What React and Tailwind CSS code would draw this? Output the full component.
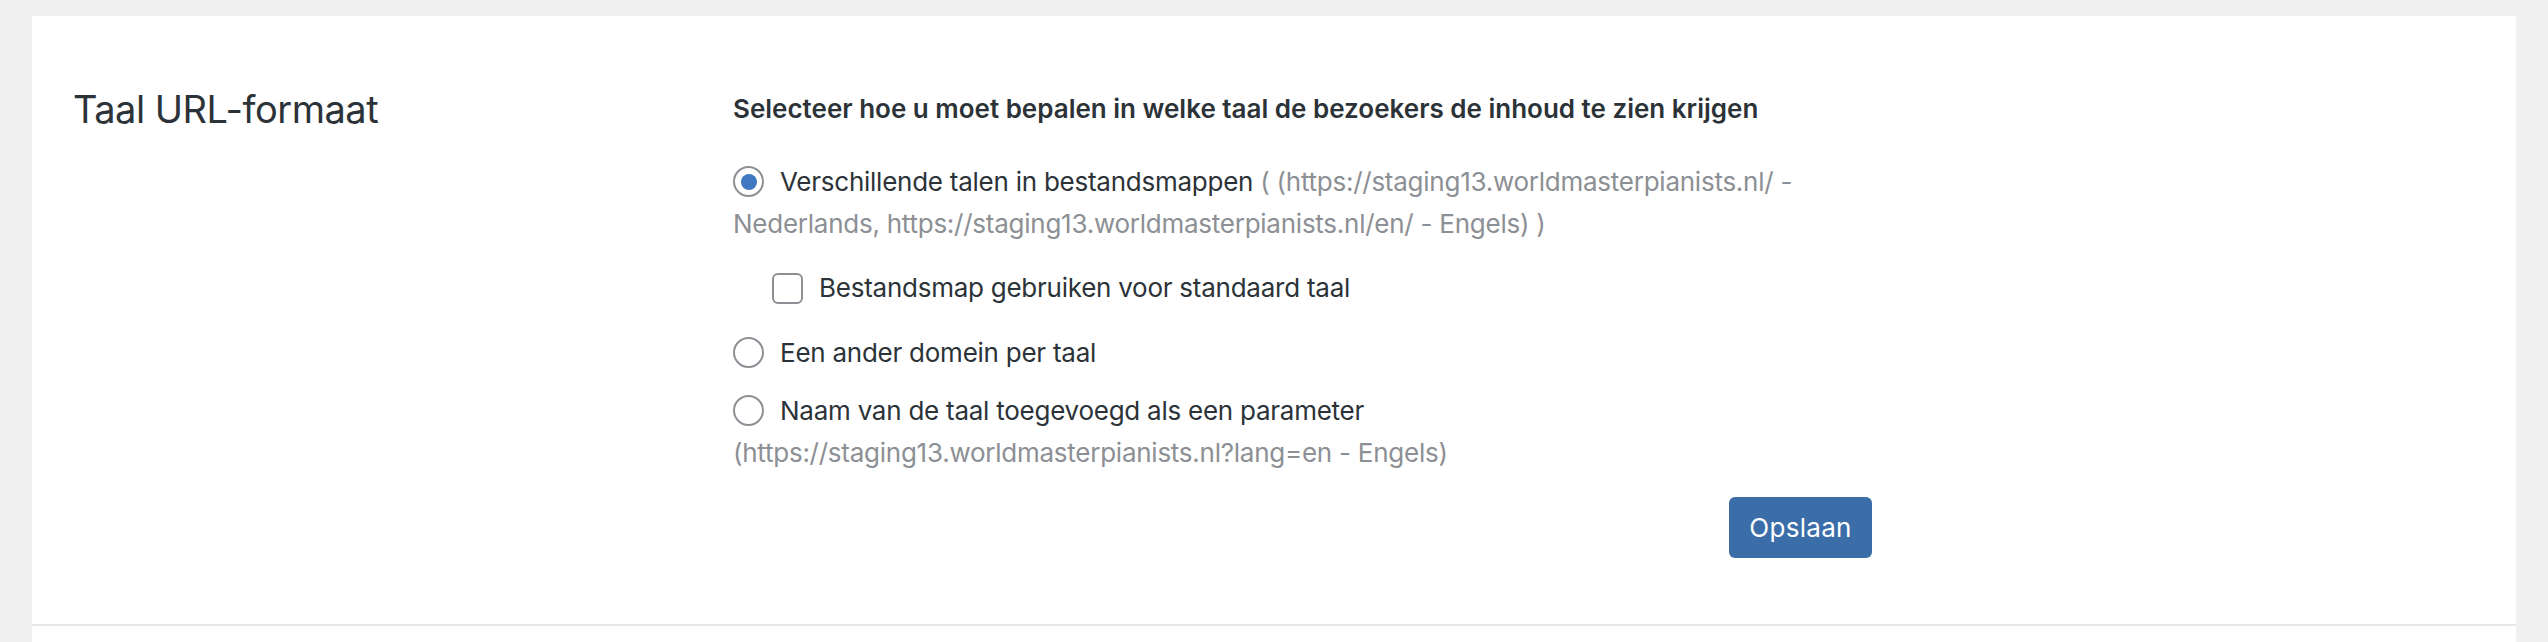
export default function App() {
  const font = { fontFamily: 'Inter, "Noto Sans", sans-serif' };
  const Radio = ({ checked }) => (
    <span className="inline-flex items-center justify-center w-[31px] h-[31px] rounded-full border-2 border-[#8c8f94] bg-white align-middle mr-[16px] relative -top-[2px]">
      {checked && <span className="block w-[16px] h-[16px] rounded-full bg-[#3f78c0]" />}
    </span>
  );
  return (
    <div className="min-h-[642px] bg-[#f0f0f0] pt-[16px] px-[32px]" style={font}>
      <div className="bg-white border-b-2 border-[#e6e6e6] h-[610px] flex">
        <div className="w-[701px] pl-[41px] pt-[72px] shrink-0">
          <h2 className="text-[38px] leading-[42px] text-[#2c3338] font-normal tracking-[-0.5px]">Taal URL-formaat</h2>
        </div>
        <div className="w-[1139px] pt-[72px] flex flex-col text-[26px] text-[#2c3338]">
          <div className="leading-[42px] font-semibold tracking-[0px]">Selecteer hoe u moet bepalen in welke taal de bezoekers de inhoud te zien krijgen</div>
          <div className="mt-[31px] leading-[42px] tracking-[-0.25px]">
            <Radio checked />
            <span>Verschillende talen in bestandsmappen</span>
            <span className="text-[#8c8f94]"> ( (https://staging13.worldmasterpianists.nl/ - Nederlands, https://staging13.worldmasterpianists.nl/en/ - Engels) )</span>
          </div>
          <div className="mt-[22px] leading-[42px] pl-[39px] flex items-center tracking-[-0.25px]">
            <span className="w-[31px] h-[31px] rounded-[6px] border-2 border-[#8c8f94] bg-white mr-[16px] shrink-0" />
            <span>Bestandsmap gebruiken voor standaard taal</span>
          </div>
          <div className="mt-[23px] leading-[42px] tracking-[-0.25px]">
            <Radio />
            <span>Een ander domein per taal</span>
          </div>
          <div className="mt-[16px] leading-[42px] tracking-[-0.25px]">
            <Radio />
            <span>Naam van de taal toegevoegd als een parameter</span>
            <br />
            <span className="text-[#8c8f94]">(https://staging13.worldmasterpianists.nl?lang=en - Engels)</span>
          </div>
          <div className="mt-[23px] flex justify-end">
            <button className="w-[143px] h-[61px] rounded-[6px] bg-[#3b6ea9] text-white text-[26px] tracking-[0.3px]">Opslaan</button>
          </div>
        </div>
      </div>
      <div className="bg-white h-[16px]" />
    </div>
  );
}
